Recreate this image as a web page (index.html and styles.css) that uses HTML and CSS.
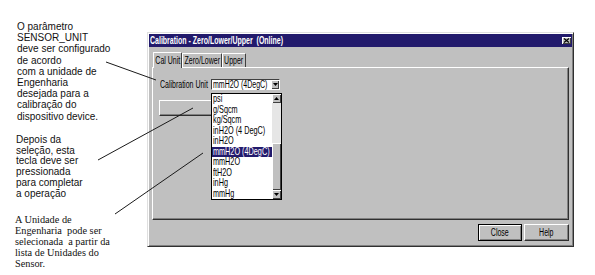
FILE: index.html
```html
<!DOCTYPE html>
<html>
<head>
  <meta charset="UTF-8">
  <title>Calibration - Zero/Lower/Upper</title>
  <link rel="stylesheet" href="styles.css">
</head>
<body>
  <div class="page">
    <div class="notes">
      <p class="note note-one">O parâmetro<br>SENSOR_UNIT<br>deve ser configurado<br>de acordo<br>com a unidade de<br>Engenharia<br>desejada para a<br>calibração do<br>dispositivo device.</p>
      <p class="note note-two">Depois da<br>seleção, esta<br>tecla deve ser<br>pressionada<br>para completar<br>a operação</p>
      <p class="note note-three">A Unidade de<br>Engenharia&nbsp; pode ser<br>selecionada&nbsp; a partir da<br>lista de Unidades do<br>Sensor.</p>
    </div>

    <div class="window">
      <div class="titlebar">
        <span class="title"><span class="sq">Calibration - Zero/Lower/Upper&nbsp; (Online)</span></span>
        <span class="close-box">
          <svg width="7" height="5" viewBox="0 0 7 5"><path d="M1 0.5 L6 4.5 M6 0.5 L1 4.5" stroke="#000" stroke-width="1.2"/></svg>
        </span>
      </div>
      <div class="window-body">
        <div class="tabs">
          <span class="tab tab-active"><span class="sq sq-mid">Cal Unit</span></span>
          <span class="tab tab-zero"><span class="sq sq-mid">Zero/Lower</span></span>
          <span class="tab tab-upper"><span class="sq sq-mid">Upper</span></span>
        </div>
        <div class="panel">
          <div class="field-row">
            <span class="field-label"><span class="sq">Calibration Unit</span></span>
            <div class="combo">
              <span class="combo-value"><span class="sq">mmH2O (4DegC)</span></span>
              <span class="combo-arrow">
                <svg width="5" height="3" viewBox="0 0 5 3"><path d="M0 0 H5 L2.5 3 Z" fill="#000"/></svg>
              </span>
              <div class="dropdown">
                <ul class="options">
                  <li><span class="sq">psi</span></li>
                  <li><span class="sq">g/Sqcm</span></li>
                  <li><span class="sq">kg/Sqcm</span></li>
                  <li><span class="sq">inH2O (4 DegC)</span></li>
                  <li><span class="sq">inH2O</span></li>
                  <li class="selected"><span class="sq">mmH2O (4DegC)</span></li>
                  <li><span class="sq">mmH2O</span></li>
                  <li><span class="sq">ftH2O</span></li>
                  <li><span class="sq">inHg</span></li>
                  <li><span class="sq">mmHg</span></li>
                </ul>
                <div class="scrollbar">
                  <span class="scroll-btn">
                    <svg width="5" height="3" viewBox="0 0 5 3"><path d="M0 3 H5 L2.5 0 Z" fill="#000"/></svg>
                  </span>
                  <span class="scroll-track"></span>
                  <span class="scroll-thumb"></span>
                  <span class="scroll-btn">
                    <svg width="5" height="3" viewBox="0 0 5 3"><path d="M0 0 H5 L2.5 3 Z" fill="#000"/></svg>
                  </span>
                </div>
              </div>
            </div>
          </div>
          <div class="blank-btn"></div>
        </div>
        <div class="actions">
          <button class="btn btn-default"><span class="sq sq-mid">Close</span></button>
          <button class="btn"><span class="sq sq-mid">Help</span></button>
        </div>
      </div>
    </div>

    <svg class="pointers" width="595" height="275" viewBox="0 0 595 275">
      <line x1="106" y1="62" x2="156" y2="80"/>
      <line x1="98" y1="160" x2="193" y2="108"/>
      <line x1="115" y1="214" x2="203" y2="153"/>
    </svg>
  </div>
</body>
</html>
```

FILE: styles.css
```css
body { margin: 0; background: #fff; font-family: "Liberation Sans", Arial, sans-serif; color: #111; }
.page { position: relative; display: flex; align-items: flex-start; width: 595px; height: 275px; overflow: hidden; }

/* notes on the left */
.notes { width: 147px; flex: none; box-sizing: border-box; padding: 21px 0 0 16px; }
.note { margin: 0; font-size: 10px; white-space: nowrap; }
.note-one { line-height: 11.2px; margin-left: 1px; }
.note-two { line-height: 10.8px; margin-top: 13px; }
.note-three { font-family: "Liberation Serif", "Times New Roman", serif; font-size: 10.3px; line-height: 11px; margin-top: 14px; margin-left: -1px; }

/* dialog window: the old screen font is narrow, so text is squeezed */
.window { margin-top: 32px; width: 427px; height: 215px; box-sizing: border-box; background: #c0c0c0; padding: 1px;
  border: 1px solid; border-color: #dfdfdf #303030 #303030 #dfdfdf;
  box-shadow: inset 1px 1px #fff, inset -1px -1px #808080;
  font-family: "Liberation Sans", Arial, sans-serif; font-size: 10px; color: #000;
  display: flex; flex-direction: column; }
.sq { display: inline-block; white-space: nowrap; transform: scaleX(0.7); transform-origin: 0 50%; }
.sq-mid { transform-origin: 50% 50%; }

.titlebar { height: 13px; background: #221a6c; color: #fff; display: flex; align-items: center; justify-content: space-between; padding-left: 1px; }
.title { font-weight: bold; white-space: nowrap; }
.close-box { width: 9px; height: 7px; margin-right: 1px; background: #c0c0c0; display: flex; align-items: center; justify-content: center;
  box-shadow: inset 1px 1px #fff, inset -1px -1px #404040; }

.window-body { flex: 1; display: flex; flex-direction: column; padding: 5px 3px 4px 3px; }

.tabs { display: flex; align-items: flex-end; height: 15px; padding-left: 1px; }
.tab { height: 14px; box-sizing: border-box; display: flex; align-items: center; justify-content: center; white-space: nowrap; overflow: visible;
  border-top: 1px solid #fff; border-left: 1px solid #fff; border-right: 1px solid #404040; border-radius: 1px 1px 0 0; }
.tab-active { width: 29px; height: 16px; margin-bottom: -1px; background: #c0c0c0; position: relative; z-index: 1; }
.tab-zero { width: 40px; }
.tab-upper { width: 24px; }

.panel { height: 153px; box-sizing: border-box; border: 1px solid; border-color: #fff #303030 #303030 #fff;
  box-shadow: inset -1px -1px #808080; padding: 11px 0 0 6px; }
.field-row { display: flex; align-items: center; gap: 3px; }
.field-label { width: 48px; margin-left: 1px; white-space: nowrap; }

.combo { position: relative; width: 69px; height: 11px; box-sizing: border-box; background: #fff; display: flex; align-items: center;
  border: 1px solid; border-color: #404040 #fff #fff #404040; }
.combo-value { flex: 1; min-width: 0; padding-left: 1px; white-space: nowrap; overflow: hidden; }
.combo-arrow { width: 8px; height: 9px; flex: none; box-sizing: border-box; background: #c0c0c0; display: flex; align-items: center; justify-content: center;
  box-shadow: inset 1px 1px #fff, inset -1px -1px #404040; }

/* open list of the combo */
.dropdown { position: absolute; top: 13px; left: -1px; width: 71px; height: 107px; box-sizing: border-box; background: #fff;
  border: 1px solid #000; display: flex; z-index: 2; }
.options { flex: 1; min-width: 0; overflow: hidden; margin: 0; padding: 0; list-style: none; }
.options li { height: 10.5px; line-height: 10.5px; padding-left: 1px; white-space: nowrap; font-size: 10.4px; }
.options li.selected { background: #221a6c; color: #fff; }
.scrollbar { width: 9px; flex: none; display: flex; flex-direction: column; }
.scroll-btn { height: 9px; flex: none; box-sizing: border-box; background: #c0c0c0; display: flex; align-items: center; justify-content: center;
  box-shadow: inset 1px 1px #fff, inset -1px -1px #404040; }
.scroll-track { flex: 1; background: #e6e6e6; }
.scroll-thumb { height: 47px; flex: none; background: #c0c0c0; box-shadow: inset 1px 1px #fff, inset -1px -1px #404040; }

.blank-btn { width: 105px; height: 16px; margin-top: 10px; box-sizing: border-box; border: 1px solid; border-color: #fff #303030 #303030 #fff;
  box-shadow: inset -1px -1px #808080; }

.actions { display: flex; justify-content: flex-end; gap: 2px; margin-top: 4px; }
.btn { height: 17px; width: 45px; padding: 0; margin: 0; background: #c0c0c0; font: inherit; color: #000; box-sizing: border-box;
  border: 1px solid; border-color: #fff #303030 #303030 #fff; box-shadow: inset -1px -1px #808080; }
.btn-default { width: 44px; border-color: #000; box-shadow: inset 1px 1px #fff, inset -1px -1px #808080; }

/* pointer lines over the dialog */
.pointers { position: absolute; top: 0; left: 0; pointer-events: none; z-index: 5; }
.pointers line { stroke: #1a1a1a; stroke-width: 1; }
```
